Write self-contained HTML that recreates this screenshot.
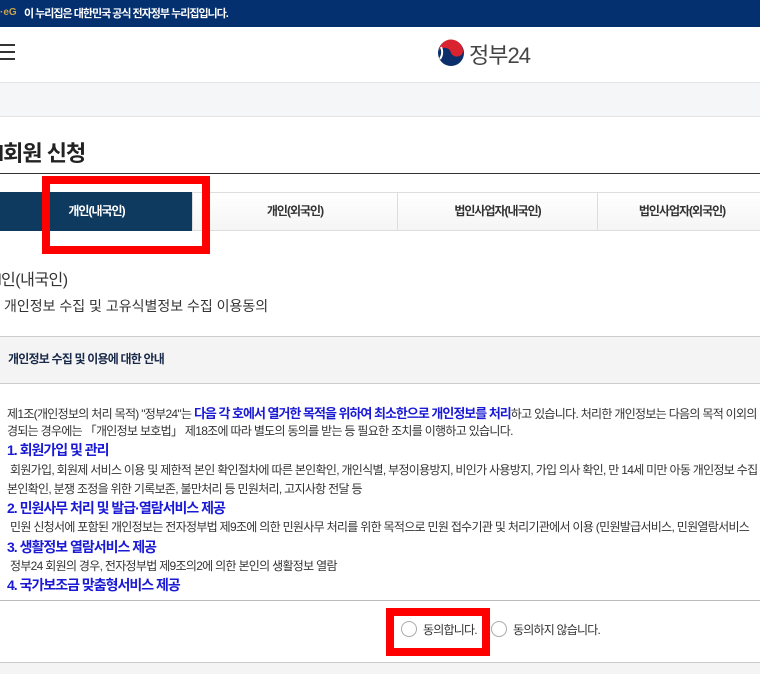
<!DOCTYPE html>
<html><head><meta charset="utf-8"><style>
*{margin:0;padding:0;box-sizing:border-box}
body{width:760px;height:674px;overflow:hidden;background:#fff;font-family:"Liberation Sans","Noto Sans CJK KR",sans-serif;color:#333;position:relative}
.abs{position:absolute;white-space:nowrap}
.top{position:absolute;left:0;top:0;width:760px;height:27px;background:#05306f}
.gray{position:absolute;left:0;top:82px;width:760px;height:35px;background:#f5f6f8;border-top:1px solid #e3e4e8;border-bottom:1px solid #e3e4e8}
.tab{position:absolute;top:192px;height:39px;border:1px solid #ddd;background:linear-gradient(#fff,#f5f5f5);font-size:12px;font-weight:bold;letter-spacing:-1px;text-align:center;line-height:37px;color:#333}
.c{font-size:12px;letter-spacing:-0.7px;color:#333;left:7px}
.b{color:#1a1ad6;font-weight:bold;font-size:14px;letter-spacing:-1px}
.radio{position:absolute;width:16px;height:16px;border:1px solid #aaa;border-radius:50%;background:#fff}
.red{position:absolute;border:8px solid #f00}
</style></head><body>
<div class="top"></div>
<div class="abs" style="left:0;top:7px;color:#c9a24a;font-size:10px;font-weight:bold">·eG</div>
<div class="abs" style="left:24px;top:5px;color:#fff;font-size:11px;font-weight:bold;letter-spacing:-1px">이 누리집은 대한민국 공식 전자정부 누리집입니다.</div>
<div class="abs" style="left:0;top:44px;width:15px;height:2px;background:#333"></div>
<div class="abs" style="left:0;top:51px;width:15px;height:2px;background:#333"></div>
<div class="abs" style="left:0;top:58px;width:15px;height:2px;background:#333"></div>
<svg class="abs" style="left:437px;top:39px" width="28" height="28" viewBox="0 0 28 28">
<circle cx="14" cy="14" r="13" fill="#0b2f6a"/>
<path d="M2 12 A12 12 0 0 1 26 13 A6.5 6.5 0 0 1 14 14 A6.5 6.5 0 0 0 2 12Z" fill="#d9232e"/>
<path d="M3 20 A12 12 0 0 0 4 8" fill="none" stroke="#fff" stroke-width="2"/>
</svg>
<div class="abs" style="left:469px;top:38px;font-size:22px;color:#444;letter-spacing:-1px">정부24</div>
<div class="gray"></div>
<div class="abs" style="left:-2px;top:136px;font-size:22px;font-weight:bold;color:#222;letter-spacing:-1px">l회원 신청</div>
<div class="abs" style="left:0;top:173px;width:760px;height:1px;background:#333"></div>
<div class="tab" style="left:0;width:193px;background:#0f3a5f;border-color:#0f3a5f;color:#fff">개인(내국인)</div>
<div class="tab" style="left:192px;width:206px">개인(외국인)</div>
<div class="tab" style="left:397px;width:201px">법인사업자(내국인)</div>
<div class="tab" style="left:597px;width:170px">법인사업자(외국인)</div>
<div class="red" style="left:42px;top:176px;width:168px;height:78px"></div>
<div class="abs" style="left:-2px;top:266px;font-size:16px;color:#333;letter-spacing:-.5px">l인(내국인)</div>
<div class="abs" style="left:4px;top:296px;font-size:14px;color:#333">개인정보 수집 및 고유식별정보 수집 이용동의</div>
<div class="abs" style="left:0;top:336px;width:760px;height:48px;background:#f4f4f4;border-top:1px solid #ccc;border-bottom:1px solid #ccc"></div>
<div class="abs" style="left:8px;top:350px;font-size:12px;font-weight:bold;color:#1a2a4a;letter-spacing:-.8px">개인정보 수집 및 이용에 대한 안내</div>
<div class="abs c" style="top:403px">제1조(개인정보의 처리 목적) "정부24"는 <span class="b" style="font-size:13px">다음 각 호에서 열거한 목적을 위하여 최소한으로 개인정보를 처리</span>하고 있습니다. 처리한 개인정보는 다음의 목적 이외의 용도로는</div>
<div class="abs c" style="top:422px">경되는 경우에는 「개인정보 보호법」 제18조에 따라 별도의 동의를 받는 등 필요한 조치를 이행하고 있습니다.</div>
<div class="abs c b" style="top:440px">1. 회원가입 및 관리</div>
<div class="abs c" style="top:461px;left:10px">회원가입, 회원제 서비스 이용 및 제한적 본인 확인절차에 따른 본인확인, 개인식별, 부정이용방지, 비인가 사용방지, 가입 의사 확인, 만 14세 미만 아동 개인정보 수집 시</div>
<div class="abs c" style="top:480px">본인확인, 분쟁 조정을 위한 기록보존, 불만처리 등 민원처리, 고지사항 전달 등</div>
<div class="abs c b" style="top:498px">2. 민원사무 처리 및 발급·열람서비스 제공</div>
<div class="abs c" style="top:518px;left:10px">민원 신청서에 포함된 개인정보는 전자정부법 제9조에 의한 민원사무 처리를 위한 목적으로 민원 접수기관 및 처리기관에서 이용 (민원발급서비스, 민원열람서비스</div>
<div class="abs c b" style="top:537px">3. 생활정보 열람서비스 제공</div>
<div class="abs c" style="top:557px;left:10px">정부24 회원의 경우, 전자정부법 제9조의2에 의한 본인의 생활정보 열람</div>
<div class="abs c b" style="top:575px">4. 국가보조금 맞춤형서비스 제공</div>
<div class="abs" style="left:0;top:600px;width:760px;height:1px;background:#bbb"></div>
<div class="radio" style="left:401px;top:621px"></div>
<div class="abs" style="left:423px;top:621px;font-size:12px;letter-spacing:-.8px;color:#333">동의합니다.</div>
<div class="radio" style="left:491px;top:621px"></div>
<div class="abs" style="left:513px;top:621px;font-size:12px;letter-spacing:-.8px;color:#333">동의하지 않습니다.</div>
<div class="red" style="left:386px;top:608px;width:104px;height:48px"></div>
<div class="abs" style="left:0;top:662px;width:760px;height:12px;background:#f4f4f4;border-top:1px solid #ccc"></div>
</body></html>
